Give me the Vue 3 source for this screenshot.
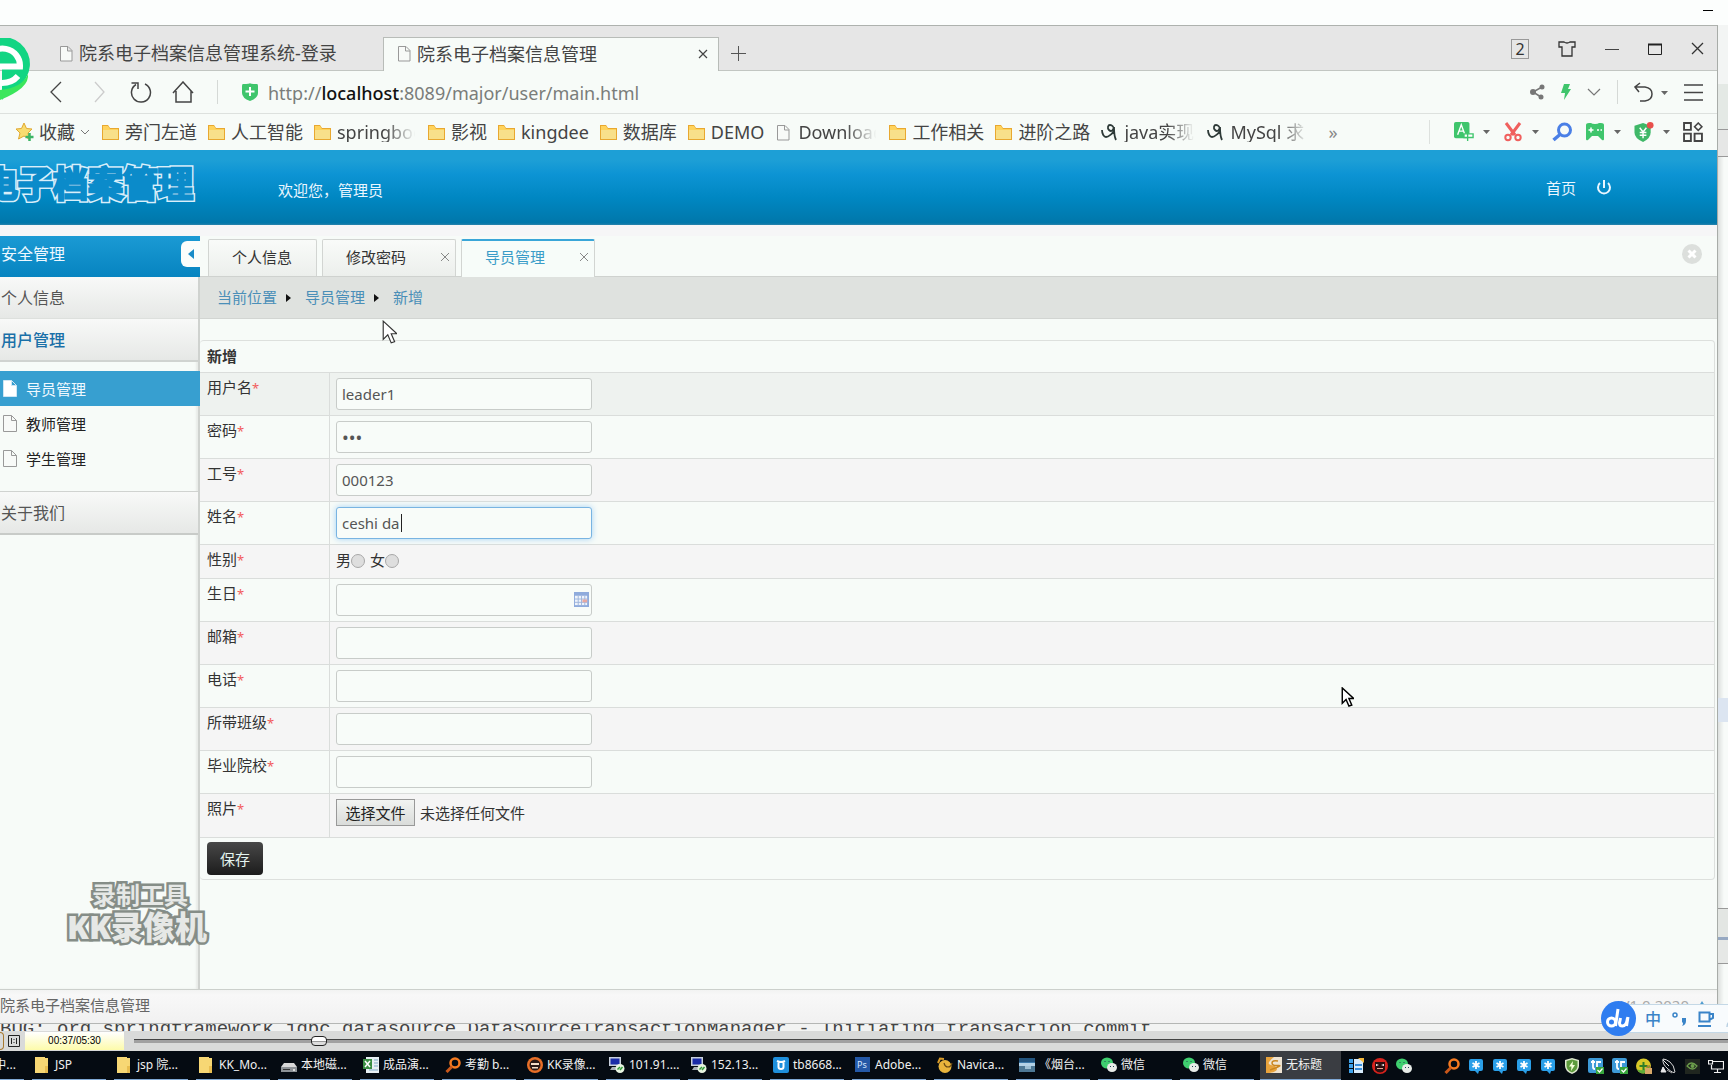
<script setup>
import { ref } from 'vue'

const bookmarks = [
  { icon: 'folder', text: '旁门左道' },
  { icon: 'folder', text: '人工智能' },
  { icon: 'folder', text: 'springboot', cut: 'cut-l' },
  { icon: 'folder', text: '影视' },
  { icon: 'folder', text: 'kingdee' },
  { icon: 'folder', text: '数据库' },
  { icon: 'folder', text: 'DEMO' },
  { icon: 'file', text: 'Download', cut: 'cut-m' },
  { icon: 'folder', text: '工作相关' },
  { icon: 'folder', text: '进阶之路' },
  { icon: 'brush', text: 'java实现', cut: 'cut-s' },
  { icon: 'brush', text: 'MySql 求', cut: 'cut-m' }
]

const tools = [
  { icon: 'translate', label: '翻译', caret: true },
  { icon: 'scissors', label: '截图', caret: true },
  { icon: 'magnifier', label: '搜索', caret: false },
  { icon: 'gamepad', label: '游戏', caret: true },
  { icon: 'yen', label: '网银', caret: true },
  { icon: 'apps', label: '扩展', caret: false }
]

const menuItems = ['导员管理', '教师管理', '学生管理']

const fields = ref([
  { id: 'username', label: '用户名', type: 'text', value: 'leader1' },
  { id: 'password', label: '密码', type: 'password', value: '123' },
  { id: 'number', label: '工号', type: 'text', value: '000123' },
  { id: 'name', label: '姓名', type: 'text', value: 'ceshi da', active: true },
  { id: 'gender', label: '性别', type: 'radio', value: '' },
  { id: 'birthday', label: '生日', type: 'date', value: '' },
  { id: 'email', label: '邮箱', type: 'text', value: '' },
  { id: 'phone', label: '电话', type: 'text', value: '' },
  { id: 'classes', label: '所带班级', type: 'text', value: '' },
  { id: 'school', label: '毕业院校', type: 'text', value: '' },
  { id: 'photo', label: '照片', type: 'file', value: '' }
])

const tasks = [
  { icon: 'tfolder', text: 'JSP' },
  { icon: 'tfolder', text: 'jsp 院...' },
  { icon: 'tfolder', text: 'KK_Mo...' },
  { icon: 'disk', text: '本地磁...' },
  { icon: 'sheet', text: '成品演...' },
  { icon: 'find', text: '考勤 b...' },
  { icon: 'devil', text: 'KK录像...' },
  { icon: 'remote', text: '101.91....' },
  { icon: 'remote', text: '152.13...' },
  { icon: 'cow', text: 'tb8668...' },
  { icon: 'ps', text: 'Adobe...' },
  { icon: 'navicat', text: 'Navica...' },
  { icon: 'photo', text: '《烟台...' },
  { icon: 'wechat', text: '微信' },
  { icon: 'wechat', text: '微信' }
]

const tray = ['list', 'reddevil', 'wechat', '', 'find', 'star', 'star', 'star', 'star', 'guard', 'tc', 'tc', 'plus360', 'dish', 'nvidia', 'net']

const position = ref(37)
const pickFile = (el) => el.parentElement.querySelector('input').click()
</script>

<template>
  <div class="desktop">
    <svg class="defs" aria-hidden="true">
      <symbol id="folder" viewBox="0 0 17 17">
        <path d="M0 1h6l2 3h9v12H0z" fill="#e8a830" /><path d="M1 2h5l2 3h8v1H1z" fill="#ffd35c" /><path d="M1 6h15v9H1z" fill="#f8e08a" />
      </symbol>
      <symbol id="file" viewBox="0 0 17 17">
        <path d="M2.500 1.500h7.500l4 4v10.500h-11.500zM9.500 1.500v4.500h4.500" fill="#f8faf8" stroke="#999" />
      </symbol>
      <symbol id="brush" viewBox="0 0 17 17">
        <path d="M1 6c0 4 2 7 4 7s8-4 8-7-2-5-4-5-3 3-1 5 4 1 5-3c0 5 0 9 2 13" fill="none" stroke="#2e3a38" stroke-width="1.800" />
      </symbol>
      <symbol id="translate" viewBox="0 0 22 22">
        <rect x="0" y="0" width="17" height="18" rx="2" fill="#3fc56c" /><path d="M4 14 8 3l4 11M5.500 10h5" fill="none" stroke="#fff" stroke-width="1.500" /><path d="M11 13h10v4H11zM15 11v10" fill="#fff" stroke="#3fc56c" stroke-width="1.500" />
      </symbol>
      <symbol id="scissors" viewBox="0 0 18 20">
        <path d="M2 1l9 12M16 1 7 13" stroke="#f0605e" stroke-width="3" fill="none" /><circle cx="4" cy="15.500" r="2.700" fill="none" stroke="#f0605e" stroke-width="2" /><circle cx="14" cy="15.500" r="2.700" fill="none" stroke="#f0605e" stroke-width="2" />
      </symbol>
      <symbol id="magnifier" viewBox="0 0 20 20">
        <circle cx="12.500" cy="8" r="6" fill="none" stroke="#4a7fe6" stroke-width="3" /><path d="M8 12.500 1.500 18" stroke="#4a7fe6" stroke-width="3.500" />
      </symbol>
      <symbol id="gamepad" viewBox="0 0 20 20">
        <path d="M1 3q0-2 3-2h2q1 1 4 1t4-1h2q3 0 3 2v14q0 2-2 1l-4-4H7l-4 4q-2 1-2-1z" fill="#3fc56c" /><path d="M3.500 8h5M6 5.500v5M12 8h2M15.500 8h1.500" stroke="#fff" stroke-width="1.500" />
      </symbol>
      <symbol id="yen" viewBox="0 0 20 21">
        <path d="M9 1 17 4v7q0 6-8 10Q0 17 0 11V4z" fill="#3fb868" /><path d="M5.500 6 9 10.500 12.500 6M9 10v7M5.500 11h7M5.500 14h7" stroke="#fff" stroke-width="1.500" fill="none" /><circle cx="16.500" cy="3.500" r="3.500" fill="#e8504c" />
      </symbol>
      <symbol id="apps" viewBox="0 0 19 19">
        <g fill="none" stroke="#444" stroke-width="1.500"><path d="M1 1h6.500v6.500H1zM1 11h6.500v7H1zM11 11h7v7h-7z" stroke-width="1.800" /><path d="M14.500 1 18 4.500 14.500 8 11 4.500z" /></g>
      </symbol>
      <symbol id="tfolder" viewBox="0 0 16 16"><path d="M0 0h10v1h3v15H0z" fill="#f7d774" /><path d="M10 9h3v7h-3z" fill="#e8bd50" /></symbol>
      <symbol id="disk" viewBox="0 0 16 16"><path d="M3 6h10l3 4H0z" fill="#d8d8d8" /><path d="M0 10h16v5H0z" fill="#8d9296" /><path d="M2 12h7v1H2z" fill="#333" /><path d="M12 12h2v2h-2z" fill="#ddd" /></symbol>
      <symbol id="sheet" viewBox="0 0 16 16"><path d="M3 0h13v16H3z" fill="#e8f0f4" /><path d="M11 3h4M11 6h4M11 9h4M6 13h9" stroke="#7fa9c4" /><path d="M0 2h9v10H0z" fill="#3b8f45" /><path d="M2 4l5 6M7 4l-5 6" stroke="#fff" stroke-width="1.500" /></symbol>
      <symbol id="find" viewBox="0 0 16 16"><circle cx="10" cy="6" r="4.500" fill="none" stroke="#f57a20" stroke-width="2.500" /><path d="M7 9.500 1.500 15" stroke="#c9571a" stroke-width="3" /></symbol>
      <symbol id="devil" viewBox="0 0 16 16"><circle cx="8" cy="8" r="8" fill="#e86f28" /><circle cx="8" cy="8" r="5.500" fill="#2a1a18" /><path d="M4 6h8v2H4zM5 10h6v1.500H5z" fill="#f4ddc8" /></symbol>
      <symbol id="reddevil" viewBox="0 0 16 16"><circle cx="8" cy="8" r="8" fill="#d8221c" /><path d="M3 4h10v8q-5 5-10 0z" fill="#2a0f10" /><path d="M4 6l3 1-3 1zM12 6 9 7l3 1z" fill="#fff" /><path d="M5 10.500h6" stroke="#e8a898" /></symbol>
      <symbol id="remote" viewBox="0 0 16 16"><path d="M0 0h12v9H0z" fill="#c8d0dc" /><path d="M1.500 1.500h9v6h-9z" fill="#1a2ca8" /><path d="M3 10h6v3H1z" fill="#a8b0b8" /><circle cx="11" cy="11.500" r="4.500" fill="#e8f4e0" /><path d="M8.500 12.500 11 10M11 13l2.500-3" stroke="#2f9c38" stroke-width="1.500" /></symbol>
      <symbol id="cow" viewBox="0 0 16 16"><rect width="16" height="16" rx="2" fill="#1e8fdc" /><path d="M4 4q4 2 8 0M5.500 5v5q0 2 2.500 2t2.500-2V5" fill="none" stroke="#fff" stroke-width="2" /></symbol>
      <symbol id="ps" viewBox="0 0 16 16"><path d="M0 0h15v15H0z" fill="#2458a6" /><text x="2" y="11" font-size="9" fill="#d4e6ff" font-family="Noto Sans, sans-serif">Ps</text></symbol>
      <symbol id="navicat" viewBox="0 0 16 16"><circle cx="8" cy="9.500" r="6.500" fill="#e8b43c" /><path d="M7 6q1 4 4 4t4-4" fill="none" stroke="#6a4a14" stroke-width="1.200" /><path d="M1 6 3 1.500l4 .5" fill="none" stroke="#d89a28" stroke-width="2" /></symbol>
      <symbol id="photo" viewBox="0 0 16 16"><path d="M0 1h16v14H0z" fill="#3b78a8" /><path d="M0 1h16v4H0z" fill="#23557f" /><path d="M0 6h16v3H0z" fill="#b4d2e6" /><path d="M0 9h16v6H0z" fill="#4e7894" /><path d="M6 9h6v3H6z" fill="#9fc0d4" /></symbol>
      <symbol id="wechat" viewBox="0 0 16 16"><ellipse cx="6" cy="6" rx="6" ry="5.500" fill="#3fcf6f" /><ellipse cx="11" cy="10.500" rx="5" ry="4.500" fill="#e8ece8" /><path d="M4 4v1M8 4v1M9.500 9v1M12.500 9v1" stroke="#245" /></symbol>
      <symbol id="untitled" viewBox="0 0 16 16"><path d="M0 0h16v16H0z" fill="#e8a33c" /><path d="M8 0h8v16H3q8-1 8-4t-6-4 3-8z" fill="#efe4d2" /><path d="M12 4Q6 3 6 6t6 2.500T4 13" fill="none" stroke="#c98520" stroke-width="1.500" /></symbol>
      <symbol id="list" viewBox="0 0 16 16"><path d="M1 1h4v4H1zM1 6h4v4H1zM1 11h4v4H1z" fill="#3fa2ea" /><path d="M6 1h9v14H6z" fill="#d9ecfb" /><path d="M7 6h7v2H7zM7 10h7v2H7z" fill="#3a8fdc" /><path d="M10 0h6v5z" fill="#f5b83a" /></symbol>
      <symbol id="star" viewBox="0 0 16 16"><path d="M3 1h10q2 0 2 2v8q0 2-2 2h-2l-1 3-3-3H3q-2 0-2-2V3q0-2 2-2z" fill="#2a9fe8" /><path d="M8 3v8M4.500 5l7 4M11.500 5l-7 4" stroke="#fff" stroke-width="1.800" /></symbol>
      <symbol id="guard" viewBox="0 0 16 16"><path d="M8 0l7 2v6q0 5-7 8Q1 13 1 8V2z" fill="#dfe8d0" /><path d="M8 1.500l5.500 1.500v5q0 4-5.500 6.500Q2.500 12 2.500 8V3z" fill="#5d9b3c" /><path d="M9 3 5 8.500h2.500L7 13l4-6H8.500z" fill="#f4ffd8" /></symbol>
      <symbol id="tc" viewBox="0 0 16 16"><rect width="15" height="15" rx="2" fill="#3d9ad8" /><path d="M3 4h4M5 2v7q0 2 2 2M13 4H9v6h3" fill="none" stroke="#fff" stroke-width="1.800" /><rect x="8" y="9" width="8" height="7" fill="#37a63c" /><path d="M9.500 12l2 2 3-3.500" fill="none" stroke="#fff" stroke-width="1.200" /></symbol>
      <symbol id="plus360" viewBox="0 0 16 16"><circle cx="7.500" cy="8" r="7.500" fill="#d8c828" /><path d="M1 11q6 4 13-4-1 8-7 8.500-4 0-6-4.500z" fill="#5fae38" /><path d="M7.500 4v8M3.500 8h8" stroke="#2f7f28" stroke-width="2" /><path d="M9 10h7v6H9z" fill="#d8a868" /><path d="M11 10V8h3v2" fill="none" stroke="#a86c34" /></symbol>
      <symbol id="dish" viewBox="0 0 16 16"><path d="M3 1Q2 6 8 11t7 3Q14 7 10 4T3 1z" fill="none" stroke="#d8d8d8" /><path d="M3 9l3 5H1zM3 2l6 6" fill="#e8e8e8" stroke="#e8e8e8" /><path d="M7 12l5 3" stroke="#aaa" /></symbol>
      <symbol id="nvidia" viewBox="0 0 16 16"><path d="M1 1h15v15H1z" fill="#20261f" /><path d="M3 8q4-6 10 0-4 6-10 0z" fill="none" stroke="#6d9f4c" stroke-width="1.300" /><circle cx="8.500" cy="8" r="2" fill="#6d9f4c" /></symbol>
      <symbol id="net" viewBox="0 0 16 16"><path d="M4.500 3.500H15.500v7.500H3.500V7M9.500 11v3.500M6 14.500h7M.5 2.500h4v3.500h-4z" fill="none" stroke="#f0f0f0" stroke-width="1.200" /></symbol>
    </svg>

    <div class="topstrip"><button class="mini" aria-label="最小化"></button></div>

    <div class="workspace">
      <div class="window">
        <svg class="elogo" viewBox="0 0 34 66" aria-hidden="true">
          <path d="M-24 28A27 27 0 1 1 26 40Q20 50 10 54Q6 57 2 62V28z" fill="#12d583" /><path d="M0 62V52Q22 50 28 36 30 50 0 62z" fill="#3be65c" />
          <path d="M-16 28.500H20A17.500 17 0 0 0-14 22M-15 33Q-10 46 2 45 12 45 18 38" fill="none" stroke="#fff" stroke-width="6" />
        </svg>
        <div class="tabbar">
          <div class="btab"><svg class="i17"><use href="#file" /></svg><span>院系电子档案信息管理系统-登录</span></div>
          <div class="btab on">
            <svg class="i17"><use href="#file" /></svg><span>院系电子档案信息管理</span>
            <button class="bclose" aria-label="关闭标签"><svg width="10" height="10"><path d="M1 1l8 8M9 1 1 9" stroke="#444" stroke-width="1.200" /></svg></button>
          </div>
          <button class="addtab" aria-label="新标签"><svg width="15" height="15"><path d="M7.500 0v15M0 7.500h15" stroke="#555" /></svg></button>
          <div class="winbtns">
            <button class="count">2</button>
            <button aria-label="皮肤"><svg width="18" height="16"><path d="M1 1h5q3 2 6 0h5v5h-3v9H4V6H1z" fill="none" stroke="#333" stroke-width="1.300" /></svg></button>
            <button aria-label="最小化"><svg width="14" height="14"><path d="M0 7.500h14" stroke="#444" /></svg></button>
            <button aria-label="最大化"><svg width="14" height="14"><path d="M.5 2.500h13v10H.5z" fill="none" stroke="#222" /><path d="M0 2.500h14" stroke="#222" stroke-width="2" /></svg></button>
            <button aria-label="关闭"><svg width="13" height="13"><path d="M1 1l11 11M12 1 1 12" stroke="#333" stroke-width="1.300" /></svg></button>
          </div>
        </div>

        <div class="addressbar">
          <div class="nav">
            <button aria-label="后退"><svg width="22" height="22"><path d="M15 1 5 11l10 10" fill="none" stroke="#444" stroke-width="1.300" /></svg></button>
            <button aria-label="前进"><svg width="22" height="22"><path d="M7 1l9 10-9 10" fill="none" stroke="#ccc" stroke-width="1.300" /></svg></button>
            <button aria-label="刷新"><svg width="22" height="22"><path d="M15 3a9.500 9.500 0 1 1-9 .5M1.500 2H8v6" fill="none" stroke="#444" stroke-width="1.500" /></svg></button>
            <button aria-label="主页"><svg width="22" height="22"><path d="M1 12 11 1l10 11M4 10v11h15V10" fill="none" stroke="#444" stroke-width="1.500" /></svg></button>
          </div>
          <i class="vline"></i>
          <svg class="shield" viewBox="0 0 16 18"><path d="M1 1q7 0 7-1 0 1 7 1 1 0 1 2v7q0 5-8 8-8-3-8-8V3q0-2 1-2z" fill="#3fc56c" /><path d="M8 4v9M3.500 8.500h9" stroke="#fff" stroke-width="2" /></svg>
          <span class="url">http://<b>localhost</b>:8089/major/user/main.html</span>
          <div class="addricons">
            <svg width="15" height="16"><circle cx="3" cy="8" r="3" fill="#777" /><circle cx="12" cy="3" r="2.500" fill="#777" /><circle cx="11" cy="13" r="2.500" fill="#777" /><path d="M12 3 3 8l8 5" fill="none" stroke="#777" stroke-width="1.500" /></svg>
            <svg width="10" height="16"><path d="M3 0h6L7 5h3L3 16l1-7H0z" fill="#3fc56c" /></svg>
            <svg width="14" height="8"><path d="M1 1l6 6 6-6" fill="none" stroke="#777" stroke-width="1.200" /></svg>
            <i class="vline"></i>
            <svg class="undo" width="34" height="20"><path d="M6 1 1 5l4 5M1 5h10q7 1 7 7t-7 7H6" fill="none" stroke="#444" stroke-width="1.500" /><path d="M27 9h7l-3.500 4z" fill="#666" /></svg>
            <svg width="19" height="17"><path d="M0 1h19M0 8.500h19M0 16h19" stroke="#444" stroke-width="1.300" /></svg>
          </div>
        </div>

        <div class="bookmarks">
          <a href="#" class="bm fav">
            <svg class="i18" viewBox="0 0 18 18"><path d="M8 0l2.500 5.500 5.500.5-4 4 1 6-5-3-5.500 3L4 10 0 6l5.500-.5z" fill="#f8dc70" stroke="#e0a830" /><path d="M13.500 10v8M9.500 14h8" stroke="#3db565" stroke-width="2.500" /></svg>
            <span>收藏</span>
            <svg width="10" height="6"><path d="M1 1l4 4 4-4" fill="none" stroke="#777" /></svg>
          </a>
          <a v-for="(b, i) in bookmarks" :key="i" href="#" class="bm"><svg class="i17"><use :href="'#' + b.icon" /></svg><span :class="b.cut">{{ b.text }}</span></a>
          <span class="more">»</span>
          <div class="tools">
            <button v-for="t in tools" :key="t.icon" :aria-label="t.label"><svg class="i20"><use :href="'#' + t.icon" /></svg><svg v-if="t.caret" width="7" height="4"><path d="M0 0h7L3.500 4z" fill="#666" /></svg></button>
          </div>
        </div>

        <header class="banner">
          <h1 data-text="电子档案管理">电子档案管理</h1>
          <span class="welcome">欢迎您，管理员</span>
          <nav>
            <a href="#">首页</a>
            <a href="#" aria-label="退出"><svg width="16" height="16"><path d="M4 3a6 6 0 1 0 8 0M8 0v8" fill="none" stroke="#eaf6ff" stroke-width="2" /></svg></a>
          </nav>
        </header>

        <div class="body">
          <aside>
            <div class="side-title"><span>安全管理</span>
              <button class="collapse" aria-label="收起"><svg width="6" height="10"><path d="M6 0v10L0 5z" fill="#1a8cc8" /></svg></button>
            </div>
            <a href="#" class="side-head">个人信息</a>
            <a href="#" class="side-head open">用户管理</a>
            <ul>
              <li v-for="(m, i) in menuItems" :key="m"><a href="#" :class="{ on: i === 0 }">
                <svg width="14" height="17"><path d="M.5.5h8l5 5v11H.5zM8.500.5v5h5" :fill="i === 0 ? '#fff' : '#f8faf8'" :stroke="i === 0 ? '#d0e6f4' : '#999'" /></svg>{{ m }}</a></li>
            </ul>
            <a href="#" class="side-head about">关于我们</a>
          </aside>

          <main>
            <div class="tabs">
              <a href="#" class="tab plain">个人信息</a>
              <a href="#" class="tab">修改密码<svg width="8" height="8"><path d="M0 0l8 8M8 0 0 8" stroke="#888" /></svg></a>
              <a href="#" class="tab on">导员管理<svg width="8" height="8"><path d="M0 0l8 8M8 0 0 8" stroke="#888" /></svg></a>
              <button class="closeall" aria-label="全部关闭"><svg width="20" height="20"><circle cx="10" cy="10" r="10" fill="#dcdfdc" /><path d="M6.500 6.500l7 7M13.500 6.500l-7 7" stroke="#fff" stroke-width="3" /></svg></button>
            </div>
            <div class="crumbs">
              <a href="#">当前位置</a><i></i><a href="#">导员管理</a><i></i><a href="#">新增</a>
            </div>
            <form @submit.prevent>
              <table>
                <thead><tr><th colspan="2">新增</th></tr></thead>
                <tbody>
                  <tr v-for="f in fields" :key="f.id" :class="f.type">
                    <td class="lab"><label :for="f.id">{{ f.label }}<em>*</em></label></td>
                    <td>
                      <div v-if="f.type === 'radio'" class="radios">
                        <label for="gender">男</label><input id="gender" type="radio" name="gender" value="m" />
                        <label for="female" class="second">女</label><input id="female" type="radio" name="gender" value="f" />
                      </div>
                      <div v-else-if="f.type === 'file'" class="filebox">
                        <input :id="f.id" type="file" hidden /><button type="button" @click="pickFile($event.target)">选择文件</button><span>未选择任何文件</span>
                      </div>
                      <div v-else class="field">
                        <input :id="f.id" v-model="f.value" :type="f.type === 'password' ? 'password' : 'text'" :class="{ active: f.active }" />
                        <i v-if="f.active" class="caret"></i>
                        <svg v-if="f.type === 'date'" class="cal" viewBox="0 0 16 16"><path d="M0 0h16v16H0z" fill="#8fabdc" /><path d="M1 4h13v10H1z" fill="#eef3fb" /><path d="M1 7.500h13M1 11h13M4.500 4v10M8 4v10M11.500 4v10" stroke="#9db4dc" /><path d="M9 8h5v3H9z" fill="#e8a8a0" /></svg>
                      </div>
                    </td>
                  </tr>
                </tbody>
                <tfoot><tr><td colspan="2"><button class="save">保存</button></td></tr></tfoot>
              </table>
            </form>
          </main>
        </div>

        <footer><span>院系电子档案信息管理</span><span class="ver">V1.0.2020<svg width="10" height="8"><path d="M0 8 5 0l5 8z" fill="#4f9cd0" /></svg></span></footer>
      </div>

      <div class="behind">
        <i class="s1"></i><i class="s2"></i><i class="s3"></i><i class="s4"></i><i class="s5"></i><i class="s6"></i><i class="s7"></i><i class="s8"></i><i class="s9"></i>
      </div>
    </div>

    <div class="console"><span>BUG: org.springframework.jdbc.datasource.DataSourceTransactionManager - Initiating transaction commit</span></div>

    <div class="player">
      <i class="edge"></i>
      <button class="ratio" aria-label="原始大小"><svg width="12" height="12"><path d="M.5.5h11v11H.5z" fill="none" stroke="#222" /><path d="M3.500 3v6M8.500 3v6M6 4v1M6 7v1" stroke="#222" /></svg></button>
      <span class="time">00:37/05:30</span>
      <input v-model="position" type="range" min="0" max="330" aria-label="进度" />
    </div>

    <div class="taskbar">
      <button class="task first">中...</button>
      <button v-for="(t, i) in tasks" :key="i" class="task"><svg class="i16"><use :href="'#' + t.icon" /></svg>{{ t.text }}</button>
      <button class="task current"><svg class="i16"><use href="#untitled" /></svg>无标题</button>
      <div class="tray">
        <template v-for="(t, i) in tray" :key="i"><svg class="i16"><use v-if="t" :href="'#' + t" /></svg></template>
      </div>
    </div>

    <div class="watermark"><span>录制工具</span><strong>KK录像机</strong></div>
    <svg class="cursor one" viewBox="0 0 13 21"><path d="M1 1v16l4-4 3 7 3-1-3-7h5z" fill="#fff" stroke="#333" /></svg>
    <svg class="cursor two" viewBox="0 0 13 21"><path d="M1 1v16l4-4 3 7 3-1-3-7h5z" fill="#fff" stroke="#000" stroke-width="1.500" /></svg>
    <div class="ime">
      <svg class="du" viewBox="0 0 35 35"><circle cx="17.500" cy="17.500" r="17.500" fill="#2f7df0" /><g fill="none" stroke="#fff" stroke-width="3"><circle cx="10.500" cy="21" r="4" /><path d="M17 8l-2.500 17M19.500 17l-1 5q0 3 3 3 4 0 5-8M27 16l-1.500 9" /></g></svg>
      <span>中</span>
      <svg width="15" height="14"><circle cx="3" cy="3" r="2" fill="none" stroke="#3a84c8" stroke-width="1.500" /><path d="M10 6h4v3q0 4-4 5 2-3 0-4z" fill="#3a84c8" /></svg>
      <svg width="17" height="16"><path d="M1.500 1.500h10v9h-10zM11 3h4v4l-4 2M0 15h13" fill="none" stroke="#3a84c8" stroke-width="2" /></svg>
      <svg width="12" height="16"><circle cx="7" cy="5" r="4" fill="none" stroke="#b8cfe2" stroke-width="1.500" /><path d="M1 16q0-6 6-6" fill="none" stroke="#b8cfe2" stroke-width="1.500" /></svg>
    </div>
  </div>
</template>

<style>
html, body { margin: 0; background: #fcfefd; }
</style>

<style scoped>
* { box-sizing: border-box; }
.desktop {
  position: relative; display: flex; flex-direction: column; min-height: 100vh; overflow: hidden;
  font: 15px/20px "Noto Sans", "Noto Sans CJK SC", sans-serif; color: #333; background: #fcfefd;
}
.defs { position: absolute; width: 0; height: 0; }
button { font: inherit; color: inherit; background: none; border: 0; padding: 0; margin: 0; display: inline-flex; align-items: center; justify-content: center; }
a { color: inherit; text-decoration: none; }
svg { display: block; flex: none; }
.i16 { width: 16px; height: 16px; }
.i17 { width: 17px; height: 17px; }
.i18 { width: 18px; height: 18px; }
.i20 { width: 20px; height: 20px; }

.topstrip { display: flex; justify-content: flex-end; height: 25px; padding: 10px 15px 0 0; }
.mini { width: 10px; height: 1px; background: #000; }
.workspace { flex: 1; display: flex; }
.window { position: relative; flex: 1; min-width: 0; display: flex; flex-direction: column; border-top: 1px solid #aeb2ae; border-right: 1px solid #a8aca8; background: #f7fbf8; }
.elogo { position: absolute; left: 0; top: 12px; width: 34px; height: 66px; z-index: 2; overflow: hidden; }

.tabbar { display: flex; align-items: flex-end; height: 45px; padding-left: 46px; background: #e6e6e6; border-bottom: 1px solid #c2c6c2; font-size: 18px; }
.btab { display: flex; align-items: center; gap: 4px; width: 337px; height: 34px; padding-left: 12px; color: #444; white-space: nowrap; }
.btab.on { position: relative; height: 34px; margin-bottom: -1px; padding-bottom: 2px; background: #f7fbf8; border: 1px solid #b8bcb8; border-bottom: 0; width: 336px; }
.bclose { margin-left: auto; margin-right: 10px; }
.addtab { height: 33px; margin-left: 12px; }
.winbtns { display: flex; align-items: center; gap: 29px; height: 43px; margin-left: auto; margin-right: 13px; }
.count { width: 18px; height: 20px; border: 1px solid #999; font-size: 16px; line-height: 18px; }

.addressbar { display: flex; align-items: center; height: 43px; padding: 0 14px 0 46px; border-bottom: 1px solid #dde1de; }
.nav { display: flex; gap: 20px; }
.vline { width: 1px; height: 24px; background: #d5d9d6; }
.nav + .vline { margin-left: 23px; }
.shield { width: 16px; height: 18px; margin-left: 24px; }
.url { margin: 2px 0 0 10px; font-size: 18px; color: #7a7d7a; }
.url b { font-weight: 500; color: #111; }
.addricons { display: flex; align-items: center; gap: 16px; margin-left: auto; }

.bookmarks { display: flex; align-items: center; height: 36px; padding: 0 14px 0 16px; font-size: 18px; color: #444; white-space: nowrap; }
.bm { display: flex; align-items: center; gap: 6px; margin-right: 11px; }
.fav { gap: 5px; margin-right: 12px; }
.cut-l, .cut-m, .cut-s { overflow: hidden; -webkit-mask-image: linear-gradient(90deg, #000 60%, transparent 98%); mask-image: linear-gradient(90deg, #000 60%, transparent 98%); }
.cut-l { width: 80px; }
.cut-m { width: 80px; }
.cut-s { width: 72px; }
.more { margin-left: 7px; color: #888; }
.tools { display: flex; align-items: center; justify-content: space-between; width: 274px; height: 24px; margin-left: auto; padding-left: 24px; border-left: 1px solid #dde1de; }
.tools button { gap: 9px; }

.banner { display: flex; align-items: center; height: 75px; padding-right: 105px; overflow: hidden; color: #eaf6ff; background: linear-gradient(#1d9fd6, #1d9fd6 10px, #0d94d4 24px, #0087c2 48px, #0077aa 73px, #2a84ac); }
.banner h1 { position: relative; width: 216px; margin: -8px 0 0 -17px; font-size: 35px; line-height: 44px; font-weight: 500; color: #d8effa; -webkit-text-stroke: 6px #d8effa; paint-order: stroke fill; white-space: nowrap; }
.banner h1::before { content: attr(data-text); position: absolute; left: 0; top: 0; color: #0b8bca; -webkit-text-stroke: 3px #0b8bca; }
.welcome { margin: 4px 0 0 79px; }
.banner nav { display: flex; align-items: center; gap: 20px; margin-left: auto; }

.body { flex: 1; display: flex; padding-top: 11px; background: linear-gradient(#f6f6f7 11px, #f7fbf8 11px); }
aside { width: 200px; flex: none; border-right: 2px solid #cfd2cf; font-size: 16px; box-shadow: inset -2px 0 2px #e8ebe8; }
.side-title { display: flex; align-items: center; height: 41px; padding: 0 0 5px 1px; margin-right: -2px; color: #eef8ff; background: linear-gradient(#1b9ad4, #0684c0); }
.collapse { width: 19px; height: 26px; margin-left: auto; background: #fafdfb; border-radius: 6px 0 0 6px; }
.side-head { display: flex; align-items: center; height: 42px; padding-left: 1px; background: linear-gradient(#f8f9f8, #e6e8e6); color: #555; border-bottom: 1px solid #dde0dd; }
.side-head.open { height: 43px; color: #1a70a8; font-weight: 500; border-bottom: 2px solid #d0d3d0; }
.side-head.about { height: 44px; border-top: 1px solid #d0d3d0; border-bottom: 2px solid #c8cbc8; }
aside ul { margin: 0; padding: 9px 0 15px; list-style: none; }
aside li a { display: flex; align-items: center; gap: 9px; height: 35px; padding-left: 3px; font-size: 15px; color: #222; }
aside li a.on { margin-right: -2px; background: #379fd0; color: #f0f9ff; }

main { flex: 1; min-width: 0; }
.tabs { display: flex; align-items: flex-end; gap: 5px; height: 41px; padding: 0 15px 0 8px; border-bottom: 1px solid #cfd2cf; }
.tab { display: flex; align-items: center; justify-content: space-between; width: 134px; height: 37px; padding: 0 6px 2px 23px; border: 1px solid #d2d5d2; border-bottom: 0; border-radius: 2px 2px 0 0; background: linear-gradient(#f9fbf9, #ecefec); }
.tab.plain { width: 109px; }
.tab.on { height: 38px; margin-bottom: -1px; padding-bottom: 4px; border-top: 2px solid #3aa6d8; background: #f7fcf9; color: #3a9cc8; }
.closeall { margin: 0 0 12px auto; }
.crumbs { display: flex; align-items: center; height: 42px; padding: 0 0 2px 17px; background: #dfe2df; border-bottom: 1px solid #d2d5d2; color: #4a8fb8; }
.crumbs i { margin: 2px 14px 0 9px; border: 4px solid transparent; border-left: 5px solid #111; border-right: 0; }

form { padding: 21px 2px 0 0; }
table { width: 100%; border: 1px solid #dde0dd; border-left: 0; border-spacing: 0; border-radius: 4px; }
th { height: 31px; padding: 0 7px 2px; text-align: left; font-weight: 700; color: #333; }
td { height: 43px; padding: 5px 6px; border-top: 1px solid #dadddb; vertical-align: top; }
.lab { width: 130px; padding: 4px 7px; border-right: 1px solid #dadddb; }
em { font-style: normal; font-size: 13px; color: #f25c5c; }
tbody tr:nth-child(odd) { background: #f5f5f5; }
tbody tr:first-child { background: #eef2ef; }
.radio td { height: 34px; }
.file td { height: 44px; }
.field { position: relative; width: 256px; height: 32px; }
.field input { display: block; width: 256px; height: 32px; padding: 0 5px; font: inherit; color: #555; background: #f8fcf9; border: 1px solid #c8ccc9; border-radius: 3px; outline: none; }
.field input.active { border-color: #79b4e2; box-shadow: 0 0 6px #a4d2f4; }
.field input[type="password"] { font-size: 18px; }
.caret { position: absolute; left: 65px; top: 7px; width: 1px; height: 18px; background: #222; }
.cal { position: absolute; right: 3px; top: 8px; width: 15px; height: 15px; }
.radios { display: flex; align-items: center; height: 20px; }
.radios input { appearance: none; width: 14px; height: 14px; margin: 2px 0 0; border: 1px solid #a8a8a8; border-radius: 50%; background: #dedede; }
.radios .second { margin-left: 5px; }
.filebox { display: flex; align-items: center; gap: 5px; height: 27px; }
.filebox button { width: 79px; height: 27px; border: 1px solid #999; background: linear-gradient(#f2f4f2, #dadcda); color: #222; }
.save { width: 56px; height: 33px; border-radius: 4px; background: linear-gradient(#484848, #1c1c1c); color: #e4f4ee; }
tfoot td { padding: 4px 7px; height: 42px; }

footer { display: flex; align-items: center; justify-content: space-between; height: 35px; padding: 0 10px 3px 0; background: linear-gradient(#f2f3f2, #f8f8f8 5px, #f1f1f1); border-top: 1px solid #ccd0cc; border-bottom: 1px solid #b4b6b4; color: #666; }
.ver { display: flex; align-items: center; gap: 8px; color: #aaa; }

.behind { flex: none; width: 10px; display: flex; flex-direction: column; background: linear-gradient(90deg, #dde0de, #f8fbf9 60%); }
.behind i { flex: none; border: 0 solid #999; }
.behind .s1 { height: 59px; background: #f3f5f4; }
.behind .s2 { height: 46px; background: #e4e9e5; border-bottom-width: 1px; }
.behind .s3 { height: 27px; background: #e6e7e6; border-bottom-width: 1px; }
.behind .s4 { height: 541px; }
.behind .s5 { height: 24px; background: #dce5f1; }
.behind .s6 { height: 187px; border-bottom-width: 1px; }
.behind .s7 { height: 28px; background: #e3e6e3; }
.behind .s8 { height: 27px; background: #e6e8e6; border-top: 3px solid #97a9c2; border-bottom-width: 1px; }
.behind .s9 { height: 60px; }

.console { height: 7px; overflow: hidden; background: #f2f3f2; font: 19px/10px "Liberation Mono", monospace; color: #444; white-space: pre; }
.player { display: flex; align-items: center; height: 20px; background: #d9dad9; }
.edge { width: 4px; height: 18px; border: 1px solid #a87a30; border-left: 0; border-radius: 0 4px 4px 0; }
.ratio { margin: 0 5px 0 4px; }
.time { width: 99px; height: 18px; text-align: center; font: 10px/18px "Liberation Sans", sans-serif; color: #000; background: linear-gradient(#fff, #fdfbaa); }
.player input { flex: 1; min-width: 0; height: 10px; margin: 0 0 0 10px; appearance: none; background: linear-gradient(#444, #444 1px, #a0a0a0 1px) no-repeat 0 3px / 100% 4px; }
.player input::-webkit-slider-thumb { appearance: none; width: 16px; height: 10px; border: 1px solid #222; border-radius: 4px; background: linear-gradient(#fff 4px, #555 4px, #ddd 5px); }

.taskbar { display: flex; height: 30px; background: #050b12; color: #f0f0f0; font-size: 12px; }
.task { justify-content: flex-start; gap: 4px; width: 74px; margin-right: 8px; padding-left: 3px; border-bottom: 2px solid #7fa8d4; white-space: nowrap; overflow: hidden; }
.task.first { width: 24px; justify-content: flex-end; padding: 0 8px 0 0; }
.task.current { width: 81px; margin: 0 7px 0 -2px; padding-left: 6px; background: #3a3d42; }
.tray { flex: 1; display: flex; align-items: center; justify-content: space-between; padding-right: 4px; }

.watermark { position: absolute; left: 66px; top: 881px; width: 142px; display: flex; flex-direction: column; align-items: center; color: #e6e8e6; font-size: 24px; line-height: 28px; font-weight: 700; -webkit-text-stroke: 5px #858d87; paint-order: stroke fill; white-space: nowrap; }
.watermark span { padding-left: 6px; }
.watermark strong { font-size: 32px; line-height: 36px; }
.cursor { position: absolute; }
.cursor.one { left: 382px; top: 320px; width: 15px; height: 24px; }
.cursor.two { left: 1341px; top: 687px; width: 13px; height: 20px; }
.ime { position: absolute; right: 0; bottom: 48px; width: 108px; height: 29px; display: flex; align-items: center; gap: 11px; background: #f8fbfd; border: 1px solid #c4d8e6; border-right: 0; color: #3a84c8; }
.ime span { font-size: 16px; font-weight: 500; margin-left: -2px; }
.du { width: 35px; height: 35px; margin-left: -20px; }
</style>
